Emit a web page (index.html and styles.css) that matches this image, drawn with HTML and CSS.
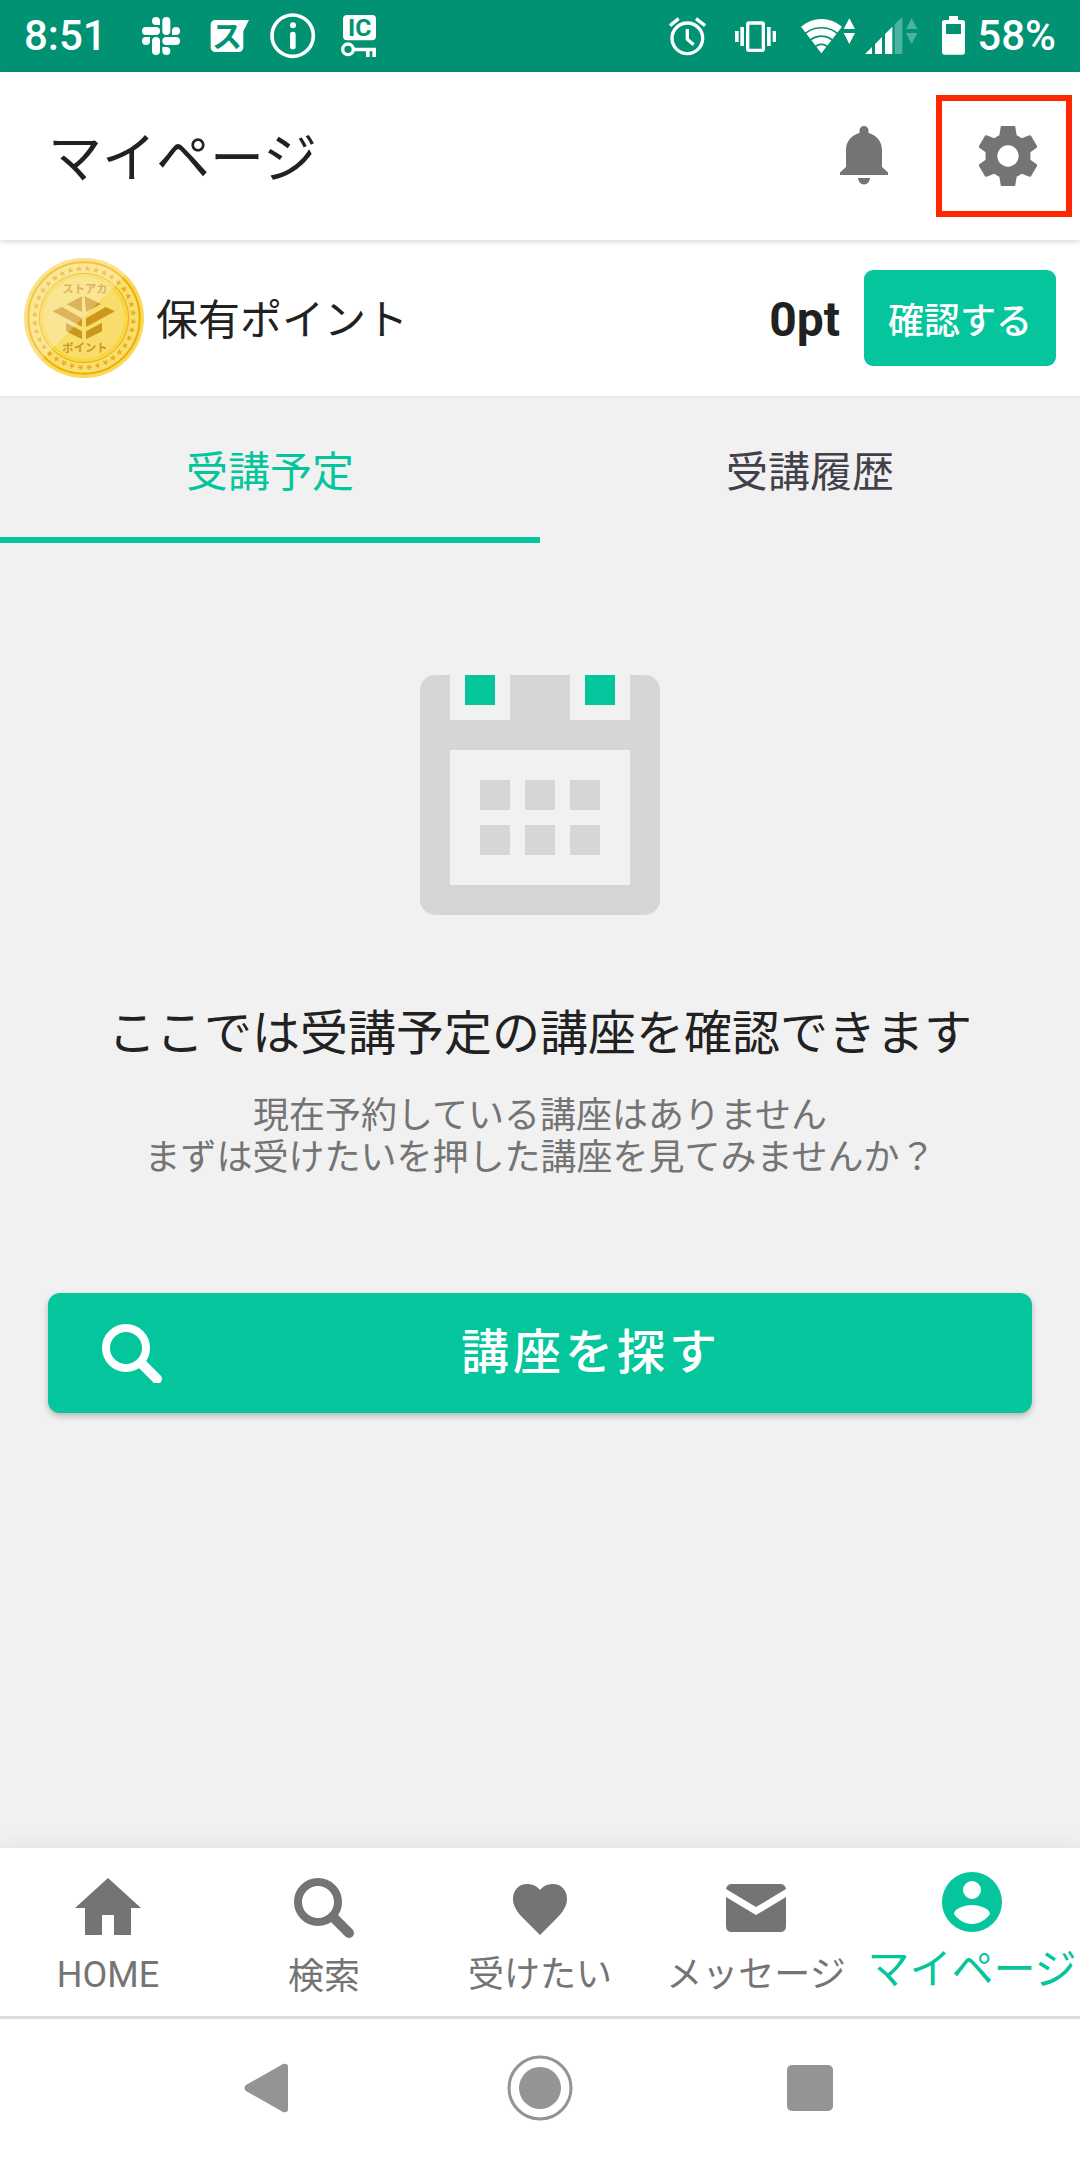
FILE: index.html
```html
<!DOCTYPE html>
<html lang="ja">
<head>
    <meta charset="UTF-8">
    <meta name="viewport" content="width=device-width, initial-scale=1.0">
    <title>マイページ</title>
    <link rel="stylesheet" href="styles.css">
</head>
<body>
    <div class="status-bar">
        <div class="status-group">
            <span class="clock">8:51</span>
            <div class="notifications">
                <svg width="48" height="48" viewBox="411 36 144 144" fill="#fff">
                    <path d="M480 75h-12a12 12 0 1 1 12-12z"/>
                    <rect x="487" y="51" width="24" height="54" rx="12"/>
                    <rect x="426" y="81" width="54" height="24" rx="12"/>
                    <path d="M516 105V93a12 12 0 1 1 12 12z"/>
                    <path d="M450 111v12a12 12 0 1 1-12-12z"/>
                    <rect x="456" y="111" width="24" height="54" rx="12"/>
                    <rect x="487" y="111" width="53" height="24" rx="12"/>
                    <path d="M487 141h12a12 12 0 1 1-12 12z"/>
                </svg>
                <svg width="48" height="48" viewBox="609 36 144 144">
                    <path fill="#fff" d="M646 60H747L730 94V142a14 14 0 0 1-14 14H646a14 14 0 0 1-14-14V74a14 14 0 0 1 14-14z"/>
                    <text class="badge-text" x="681" y="142" font-size="90">ス</text>
                </svg>
                <svg width="48" height="48" viewBox="807 36 144 144" fill="#fff">
                    <circle cx="878" cy="107" r="62" fill="none" stroke="#fff" stroke-width="11"/>
                    <circle cx="879" cy="76" r="9"/>
                    <rect x="870" y="95" width="17" height="53" rx="8"/>
                </svg>
                <svg width="48" height="48" viewBox="1005 36 144 144">
                    <rect x="1029" y="45" width="99" height="76" rx="12" fill="#fff"/>
                    <text class="badge-text" x="1079" y="109" font-size="74">IC</text>
                    <circle cx="1044" cy="148" r="16" fill="none" stroke="#fff" stroke-width="10"/>
                    <path fill="#fff" d="M1060 143h68v28h-11v-17h-8v17h-11v-17h-38z"/>
                </svg>
            </div>
        </div>
        <div class="status-group">
            <svg width="48" height="48" viewBox="72 36 144 144" fill="none" stroke="#fff" stroke-width="10">
                <circle cx="145" cy="115" r="46"/>
                <path d="M145 87v31l19 16M93 77l26-21M171 56l27 21"/>
            </svg>
            <svg width="48" height="48" viewBox="276 36 144 144" fill="#fff">
                <rect x="326" y="69" width="47" height="82" rx="4" fill="none" stroke="#fff" stroke-width="10"/>
                <path d="M304 81h11v57h-11zM288 93h11v33h-11zM384 81h11v57h-11zM401 93h10v33h-10z"/>
            </svg>
            <div class="network">
                <svg width="60" height="48" viewBox="480 36 180 144" fill="#fff">
                    <path d="M547 160L486 80a94 94 0 0 1 123 0z"/>
                    <g fill="none" stroke="#009272" stroke-width="5">
                        <path d="M490 109a76 76 0 0 1 114 0"/>
                        <path d="M506 129a51 51 0 0 1 82 0"/>
                        <path d="M524 146a27 27 0 0 1 46 0"/>
                    </g>
                    <path d="M631 55l17 32h-34zM614 99h34l-17 33z"/>
                </svg>
                <svg width="60" height="48" viewBox="666 36 180 144" fill="#fff">
                    <path d="M678 162l21-21v21zM708 132l21-21v51h-21zM738 102l22-22v82h-22z"/>
                    <path opacity=".3" d="M767 73l23-23v112h-23zM818 55l17 32h-34zM801 99h34l-17 33z"/>
                </svg>
            </div>
            <div class="battery">
                <svg width="24" height="48" viewBox="903 36 72 144" fill="#fff">
                    <path fill-rule="evenodd" d="M927 48h27v12h13a8 8 0 0 1 8 8v88a8 8 0 0 1-8 8h-53a8 8 0 0 1-8-8V68a8 8 0 0 1 8-8h13zM918 72v30h45V72z"/>
                </svg>
                <span>58%</span>
            </div>
        </div>
    </div>

    <header class="header">
        <h1>マイページ</h1>
        <div class="header-actions">
            <button type="button" class="icon-button" aria-label="お知らせ">
                <svg width="48" height="60" viewBox="0 0 48 60" fill="#747474">
                    <path d="M24 0a4.500 4.500 0 0 1 4.500 4.500V7C37 9 42 16 42 24v17l6 5.500V49H0v-2.500L6 41V24C6 16 11 9 19.500 7V4.500A4.500 4.500 0 0 1 24 0zM18 52h12a6 6.500 0 0 1-12 0z"/>
                </svg>
            </button>
            <button type="button" class="icon-button highlighted" aria-label="設定">
                <svg width="60" height="60" viewBox="0 0 180 180" fill="#747474">
                    <path fill-rule="evenodd" d="M71 0h38q2 0 3 3l4 25q8 4 16 9l22-9q3-1 5 1l18 31q1 3-1 5l-19 14q1 11 0 22l19 14q2 2 1 5l-18 31q-2 2-5 1l-22-9q-8 5-16 9l-4 25q-1 3-3 3H71q-2 0-3-3l-4-25q-8-4-16-9l-22 9q-3 1-5-1L3 120q-1-3 1-5l19-14q-1-11 0-22L4 65q-2-2-1-5L21 29q2-2 5-1l22 9q8-5 16-9l4-25q1-3 3-3zM90 58a32 32 0 1 0 0 64a32 32 0 1 0 0-64z"/>
                </svg>
            </button>
        </div>
    </header>

    <section class="points">
        <svg class="coin" width="120" height="120" viewBox="0 0 360 360">
            <defs>
                <path id="star" fill="#efaa1c" d="M180 22l3 7h7l-6 4 3 7-7-4-7 4 3-7-6-4h7z"/>
                <g id="stars">
                    <use href="#star"/>
                    <use href="#star" transform="rotate(10 180 180)"/>
                    <use href="#star" transform="rotate(20 180 180)"/>
                    <use href="#star" transform="rotate(30 180 180)"/>
                    <use href="#star" transform="rotate(40 180 180)"/>
                    <use href="#star" transform="rotate(50 180 180)"/>
                </g>
                <clipPath id="coin-shape"><circle cx="180" cy="180" r="180"/></clipPath>
            </defs>
            <circle cx="180" cy="180" r="180" fill="#f8d95a"/>
            <circle cx="180" cy="180" r="167" fill="#f8df70" stroke="#f0ab00" stroke-width="6"/>
            <g transform="rotate(4 180 180)">
                <use href="#stars"/>
                <use href="#stars" transform="rotate(60 180 180)"/>
                <use href="#stars" transform="rotate(120 180 180)"/>
                <use href="#stars" transform="rotate(180 180 180)"/>
                <use href="#stars" transform="rotate(240 180 180)"/>
                <use href="#stars" transform="rotate(300 180 180)"/>
            </g>
            <circle cx="180" cy="180" r="134" fill="#f7d640" stroke="#eeaa10" stroke-width="3"/>
            <circle cx="180" cy="180" r="122" fill="#f8dc6c"/>
            <g fill="#cd971e">
                <path d="M128 139l46-24v47zM182 115l49 23-45 24z"/>
                <path d="M86 160l28-13 60 34v25zM273 160l-28-13-59 34v26z"/>
                <path d="M126 194l48 26v24l-48-24zM234 194l-48 26v24l48-24z"/>
            </g>
            <text class="coin-text" x="183" y="104">ストアカ</text>
            <text class="coin-text" x="183" y="281">ポイント</text>
            <path clip-path="url(#coin-shape)" fill="#fff" opacity=".28" d="M0 0h356L0 356z"/>
        </svg>
        <h2>保有ポイント</h2>
        <span class="points-value">0pt</span>
        <button type="button" class="confirm-button">確認する</button>
    </section>

    <nav class="tabs">
        <a href="#upcoming" class="tab active">受講予定</a>
        <a href="#history" class="tab">受講履歴</a>
    </nav>

    <main class="content" id="upcoming">
        <svg class="calendar" width="240" height="240" viewBox="0 0 240 240">
            <rect width="240" height="240" rx="15" fill="#d6d6d6"/>
            <path fill="#f1f1f1" d="M30 0h60v45H30zM150 0h60v45h-60zM30 75h180v135H30z"/>
            <path fill="#04c59b" d="M45 0h30v30H45zM165 0h30v30h-30z"/>
            <path fill="#d6d6d6" d="M60 105h30v30H60zM105 105h30v30h-30zM150 105h30v30h-30zM60 150h30v30H60zM105 150h30v30h-30zM150 150h30v30h-30z"/>
        </svg>
        <h2>ここでは受講予定の講座を確認できます</h2>
        <p>現在予約している講座はありません<br>まずは受けたいを押した講座を見てみませんか？</p>
        <button type="button" class="search-button">
            <svg width="60" height="60" viewBox="0 0 60 60" fill="none" stroke="#fff">
                <circle cx="24" cy="25" r="20" stroke-width="8"/>
                <path d="M39 40l16 16" stroke-width="10" stroke-linecap="round"/>
            </svg>
            <span>講座を探す</span>
        </button>
    </main>

    <nav class="bottom-nav">
        <a href="#home" class="nav-item">
            <svg width="66" height="60" viewBox="0 0 66 60" fill="#747474">
                <path d="M33 1l33 30h-10v27H39V38H27v20H10V31H0z"/>
            </svg>
            <span>HOME</span>
        </a>
        <a href="#search" class="nav-item">
            <svg width="60" height="62" viewBox="0 0 60 62" fill="none" stroke="#747474">
                <circle cx="24" cy="25" r="20" stroke-width="8"/>
                <path d="M39 40l16 16" stroke-width="10" stroke-linecap="round"/>
            </svg>
            <span>検索</span>
        </a>
        <a href="#wish" class="nav-item">
            <svg width="54" height="60" viewBox="0 0 54 60" fill="#747474">
                <path d="M27 58L11 42C4 35 0 29 0 22 0 13 6 7 14 7c5 0 10 2 13 6 3-4 8-6 13-6 8 0 14 6 14 15 0 7-4 13-11 20z"/>
            </svg>
            <span>受けたい</span>
        </a>
        <a href="#messages" class="nav-item">
            <svg width="60" height="60" viewBox="0 0 60 60" fill="#747474">
                <path d="M6 7h48q5 0 6 5L30 30 0 12q1-5 6-5zM0 20l30 18 30-18v29q0 6-6 6H6q-6 0-6-6z"/>
            </svg>
            <span>メッセージ</span>
        </a>
        <a href="#mypage" class="nav-item active">
            <svg width="60" height="60" viewBox="0 0 60 60" fill="#04c59b">
                <path fill-rule="evenodd" d="M30 0a30 30 0 1 0 0 60a30 30 0 1 0 0-60zM30 9a9 9 0 1 1 0 18a9 9 0 1 1 0-18zM12 42c0-6 12-9 18-9s18 3 18 9c-4 6-11 10-18 10s-14-4-18-10z"/>
            </svg>
            <span>マイページ</span>
        </a>
    </nav>

    <div class="system-nav">
        <button type="button" aria-label="戻る">
            <svg width="66" height="66" viewBox="0 0 66 66" fill="#949494">
                <path d="M9 30L46 9q5-1 5 3v42q0 4-5 3L9 36q-3-3 0-6z"/>
            </svg>
        </button>
        <button type="button" aria-label="ホーム">
            <svg width="66" height="66" viewBox="0 0 66 66" fill="#949494">
                <circle cx="33" cy="33" r="31" fill="none" stroke="#949494" stroke-width="3"/>
                <circle cx="33" cy="33" r="21"/>
            </svg>
        </button>
        <button type="button" aria-label="履歴">
            <svg width="66" height="66" viewBox="0 0 66 66" fill="#949494">
                <rect x="10" y="10" width="46" height="46" rx="5"/>
            </svg>
        </button>
    </div>
</body>
</html>
```
FILE: styles.css
```css
* {
    margin: 0;
    padding: 0;
    box-sizing: border-box;
}

body {
    font-family: Roboto, 'Noto Sans CJK JP', sans-serif;
    background: #f1f1f1;
    color: #212121;
    min-height: 100vh;
    display: flex;
    flex-direction: column;
}

svg {
    display: block;
    flex-shrink: 0;
}

h1, h2 {
    font-weight: 400;
}

a {
    text-decoration: none;
}

button {
    font-family: inherit;
    border: none;
    background: none;
    cursor: pointer;
}

/* Status bar */
.status-bar {
    height: 72px;
    padding: 0 24px;
    background: #009272;
    color: #fff;
    font-size: 42px;
    font-weight: 500;
    line-height: 74px;
    display: flex;
    justify-content: space-between;
    align-items: center;
}

.status-group {
    display: flex;
    align-items: center;
    gap: 20px;
}

.clock {
    margin-right: 10px;
}

.notifications {
    display: flex;
    gap: 18px;
}

.network {
    display: flex;
    gap: 2px;
}

.battery {
    display: flex;
    align-items: center;
    gap: 12px;
}

.badge-text {
    fill: #009272;
    font-weight: 700;
    text-anchor: middle;
}

/* Header */
.header {
    height: 168px;
    padding-left: 48px;
    background: #fff;
    box-shadow: 0 1px 6px rgba(0, 0, 0, 0.2);
    display: flex;
    justify-content: space-between;
    align-items: center;
    z-index: 1;
}

.header h1 {
    padding-top: 8px;
    font-size: 54px;
    line-height: 72px;
}

.header-actions {
    display: flex;
    align-self: stretch;
}

.icon-button {
    width: 144px;
    display: flex;
    justify-content: center;
    align-items: center;
}

.highlighted {
    position: relative;
}

.highlighted::after {
    content: '';
    position: absolute;
    inset: 23px 8px 23px 0;
    border: 6px solid #ff2600;
}

/* Points */
.points {
    height: 159px;
    padding: 0 24px;
    background: #fff;
    border-bottom: 3px solid #ebebeb;
    display: flex;
    align-items: center;
}

.points h2 {
    flex: 1;
    margin-left: 12px;
    padding-top: 6px;
    font-size: 42px;
    line-height: 60px;
}

.coin-text {
    fill: #cd971e;
    font-size: 34px;
    font-weight: 700;
    text-anchor: middle;
}

.points-value {
    padding-top: 4px;
    font-size: 48px;
    font-weight: 700;
    line-height: 60px;
}

.confirm-button {
    height: 96px;
    margin-left: 24px;
    padding: 0 24px;
    border-radius: 9px;
    background: #04c59b;
    color: #fff;
    font-size: 36px;
    font-weight: 500;
}

/* Tabs */
.tabs {
    display: flex;
}

.tab {
    flex: 1;
    height: 144px;
    border-bottom: 6px solid transparent;
    color: #424149;
    font-size: 42px;
    line-height: 148px;
    text-align: center;
}

.tab.active {
    border-color: #04c59b;
    color: #04c59b;
}

/* Empty state */
.content {
    flex: 1;
    padding: 132px 48px 48px;
    display: flex;
    flex-direction: column;
    align-items: center;
    text-align: center;
}

.content h2 {
    margin-top: 86px;
    font-size: 48px;
    line-height: 66px;
}

.content p {
    margin-top: 28px;
    color: #747474;
    font-size: 36px;
    line-height: 42px;
}

.search-button {
    width: 100%;
    height: 120px;
    margin-top: 114px;
    padding: 0 12px 0 54px;
    border-radius: 12px;
    background: #04c59b;
    box-shadow: 0 3px 6px rgba(0, 0, 0, 0.25);
    color: #fff;
    font-size: 48px;
    font-weight: 500;
    letter-spacing: 4px;
    display: flex;
    align-items: center;
}

.search-button span {
    flex: 1;
    line-height: 66px;
}

/* Bottom navigation */
.bottom-nav {
    height: 171px;
    background: #fff;
    border-bottom: 3px solid #dcdcdc;
    box-shadow: 0 0 24px rgba(0, 0, 0, 0.08);
    display: grid;
    grid-template-columns: repeat(5, 1fr);
}

.nav-item {
    padding-top: 29px;
    color: #747474;
    font-size: 36px;
    line-height: 48px;
    white-space: nowrap;
    display: flex;
    flex-direction: column;
    align-items: center;
    gap: 14px;
}

.nav-item.active {
    padding-top: 24px;
    color: #04c59b;
    font-size: 42px;
}

/* System navigation */
.system-nav {
    height: 141px;
    padding: 0 135px 4px;
    background: #fff;
    display: grid;
    grid-template-columns: repeat(3, 1fr);
    align-items: center;
}

.system-nav button {
    display: flex;
    justify-content: center;
}
```
